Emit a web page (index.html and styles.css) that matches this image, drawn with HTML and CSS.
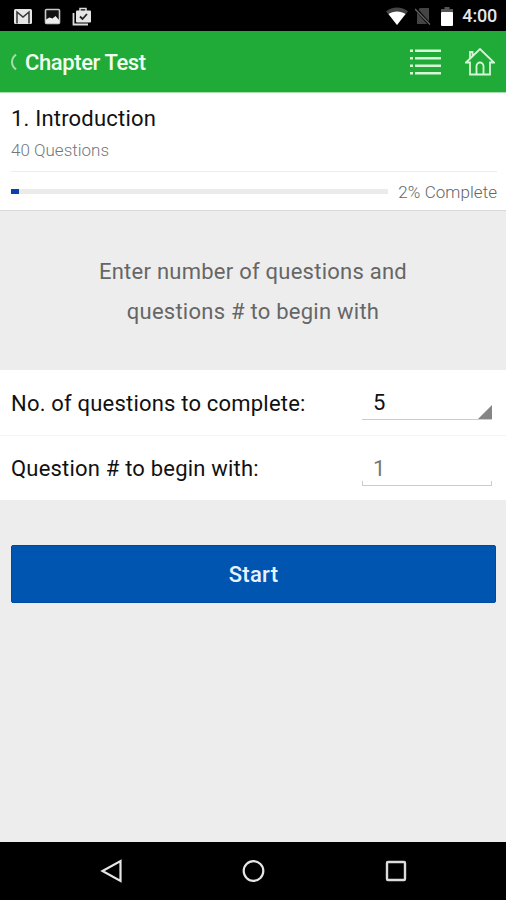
FILE: index.html
```html
<!DOCTYPE html>
<html lang="en">
<head>
    <meta charset="UTF-8">
    <meta name="viewport" content="width=device-width, initial-scale=1.0">
    <title>Chapter Test</title>
    <link rel="stylesheet" href="styles.css">
</head>
<body>
    <div class="status-bar">
        <div class="status-left">
            <svg width="20" height="17" viewBox="0 0 20 17">
                <rect x="1" y="1" width="18" height="15" rx="1.5" fill="#e6e6e6"/>
                <path d="M4 15.500V4l6 5 6-5v11.500" fill="none" stroke="#333" stroke-width="1.5"/>
            </svg>
            <svg width="17" height="17" viewBox="0 0 17 17">
                <rect x="1.5" y="1.5" width="14" height="14" rx="1" fill="#111" stroke="#c9c9c9" stroke-width="1.6"/>
                <path d="M2 11.500l3.500-2 3 1 3-2.500 3.500 4V15H2z" fill="#eee"/>
            </svg>
            <svg width="20" height="19" viewBox="0 0 20 19">
                <path d="M1.5 6v11.500H16" fill="none" stroke="#ddd" stroke-width="1.8"/>
                <path d="M8 4V1.500h6V4" fill="none" stroke="#ddd" stroke-width="1.5"/>
                <rect x="4" y="3.5" width="15" height="12" rx="1" fill="#e6e6e6"/>
                <path d="M8 9.500l2.500 2.500 4.500-5" fill="none" stroke="#222" stroke-width="1.8"/>
            </svg>
        </div>
        <div class="status-right">
            <svg class="wifi" width="22" height="18" viewBox="0 0 22 18">
                <path d="M0 4.500C6-.8 16-.8 22 4.500L11 18z" fill="#444"/>
                <path d="M2.500 7C7 3.500 15 3.500 19.500 7L11 18z" fill="#fff"/>
            </svg>
            <svg class="no-sim" width="16" height="18" viewBox="0 0 16 18">
                <path d="M5 1h9v16H2V4z" fill="#444"/>
                <path d="M0 1l15 17" stroke="#000" stroke-width="3"/>
                <path d="M0 2l15 15.500" stroke="#666" stroke-width="1.3"/>
            </svg>
            <svg class="battery" width="12" height="19" viewBox="0 0 12 19">
                <path d="M3.500 0h5v2H12v4H0V2h3.500z" fill="#555"/>
                <rect y="5" width="12" height="14" rx="1" fill="#fff"/>
            </svg>
            <span class="clock">4:00</span>
        </div>
    </div>

    <header class="header">
        <svg class="back" width="8" height="18" viewBox="0 0 8 18">
            <path d="M7 1.500L4.500 4Q1.500 9 4.500 14L7 16.500" fill="none" stroke="#a6dda9" stroke-width="2"/>
        </svg>
        <h1>Chapter Test</h1>
        <svg class="list-icon" width="31" height="28" viewBox="0 0 31 28" fill="#d5f7d5">
            <path d="M0 1.500h3v2.500H0zM5 1.500h26v2.500H5zM0 9h3v2.500H0zM5 9h26v2.500H5zM0 16.500h3v2.500H0zM5 16.500h26v2.500H5zM0 24h3v2.500H0zM5 24h26v2.500H5z"/>
        </svg>
        <svg class="home-icon" width="30" height="29" viewBox="0 0 30 29" fill="none" stroke="#d5f7d5" stroke-width="1.8">
            <path d="M1 15.500L15 2l14 13.500h-4V27.500H5V15.500zM5 12V5h2.500v4"/>
            <path d="M11.500 27.500V19a3.500 3.500 0 0 1 7 0v8.500"/>
        </svg>
    </header>

    <section class="chapter">
        <h2>1. Introduction</h2>
        <p class="count">40 Questions</p>
        <div class="progress-row">
            <div class="progress"><div class="progress-fill" style="width: 2%"></div></div>
            <span class="progress-label">2% Complete</span>
        </div>
    </section>

    <p class="instructions">Enter number of questions and<br>questions # to begin with</p>

    <form class="test-form">
        <div class="form-row">
            <span class="label">No. of questions to complete:</span>
            <div class="field select">5<svg width="14" height="14" viewBox="0 0 14 14"><path d="M14 0v14H0z" fill="#858585"/></svg></div>
        </div>
        <div class="form-row">
            <span class="label">Question # to begin with:</span>
            <div class="field input">1</div>
        </div>
    </form>

    <button type="button" class="start-btn">Start</button>

    <nav class="nav-bar">
        <svg width="24" height="26" viewBox="0 0 24 26"><path d="M20.500 3v20L2.500 13z" fill="none" stroke="#e6e6e6" stroke-width="2.2"/></svg>
        <svg width="24" height="26" viewBox="0 0 24 26"><circle cx="11.5" cy="13" r="9.8" fill="none" stroke="#e6e6e6" stroke-width="2.2"/></svg>
        <svg width="24" height="26" viewBox="0 0 24 26"><rect x="3" y="4" width="18" height="18" rx="1" fill="none" stroke="#dcdcdc" stroke-width="2.4"/></svg>
    </nav>
</body>
</html>
```

FILE: styles.css
```css
* {
    box-sizing: border-box;
}

body {
    display: flex;
    flex-direction: column;
    height: 900px;
    margin: 0;
    background-color: #ededed;
    font-family: Roboto, "Liberation Sans", sans-serif;
    color: #111;
}

svg {
    display: block;
    flex-shrink: 0;
}

h1, h2, p {
    margin: 0;
}

.status-bar {
    display: flex;
    justify-content: space-between;
    align-items: center;
    height: 31px;
    padding: 1px 9px 0 13px;
    background-color: #000;
}

.status-left,
.status-right {
    display: flex;
    align-items: center;
}

.status-left {
    gap: 11px;
}

.no-sim {
    margin-left: 7px;
}

.battery {
    margin: 0 9px 0 10px;
}

.clock {
    font-size: 18px;
    font-weight: 500;
    line-height: 30px;
    letter-spacing: -0.2px;
    color: #e6e6e6;
}

.header {
    display: flex;
    align-items: center;
    height: 62px;
    padding: 0 11px 0 9px;
    background-color: #20aa38;
    border-bottom: 1px solid #a8dfb0;
}

.header h1 {
    flex: 1;
    margin-left: 8px;
    padding-top: 2px;
    font-size: 22px;
    font-weight: 500;
    line-height: 60px;
    letter-spacing: -0.4px;
    color: #f0fff0;
}

.home-icon {
    margin-left: 24px;
}

.chapter {
    height: 118px;
    padding: 10px 9px 0 11px;
    background-color: #fff;
    border-bottom: 1px solid #d9d9d9;
}

.chapter h2 {
    font-size: 22px;
    font-weight: 400;
    line-height: 32px;
    letter-spacing: 0.2px;
}

.count {
    height: 37px;
    font-size: 17px;
    font-weight: 300;
    line-height: 30px;
    color: #777;
    border-bottom: 1px solid #ededed;
}

.progress-row {
    display: flex;
    align-items: center;
    height: 39px;
}

.progress {
    flex: 1;
    height: 5px;
    margin-right: 10px;
    background-color: #ebebeb;
}

.progress-fill {
    height: 5px;
    background-color: #0b41a8;
}

.progress-label {
    font-size: 17px;
    font-weight: 300;
    letter-spacing: 0.05px;
    color: #666;
}

.instructions {
    height: 159px;
    padding-top: 41px;
    font-size: 22px;
    line-height: 40px;
    letter-spacing: 0.25px;
    text-align: center;
    color: #666;
}

.test-form {
    height: 130px;
    background-color: #fff;
}

.form-row {
    display: flex;
    justify-content: space-between;
    height: 65px;
    padding: 0 14px 0 11px;
}

.form-row + .form-row {
    border-top: 1px solid #f5f5f5;
}

.label {
    font-size: 22px;
    line-height: 67px;
    letter-spacing: 0.2px;
}

.form-row + .form-row .label {
    line-height: 65px;
}

.field {
    display: flex;
    justify-content: space-between;
    align-items: flex-end;
    width: 130px;
    height: 50px;
    padding-left: 11px;
    border-bottom: 1px solid #ccc;
    font-size: 22px;
    line-height: 32px;
}

/* underline with short upturned ends */
.input {
    color: #777;
    border-bottom: 1px solid #ccc;
    background: linear-gradient(#ccc, #ccc) left bottom / 1px 4px no-repeat,
        linear-gradient(#ccc, #ccc) right bottom / 1px 4px no-repeat;
}

.start-btn {
    height: 58px;
    margin: 45px 10px 0 11px;
    padding: 2px 0 0;
    background-color: #0055b0;
    border: 1px solid #0048a0;
    border-radius: 2px;
    font-family: inherit;
    font-size: 22px;
    font-weight: 500;
    line-height: 54px;
    letter-spacing: 0.3px;
    color: #e8f2ff;
}

.nav-bar {
    display: flex;
    justify-content: space-between;
    align-items: center;
    height: 58px;
    margin-top: auto;
    padding: 0 98px 0 100px;
    background-color: #000;
}
```
